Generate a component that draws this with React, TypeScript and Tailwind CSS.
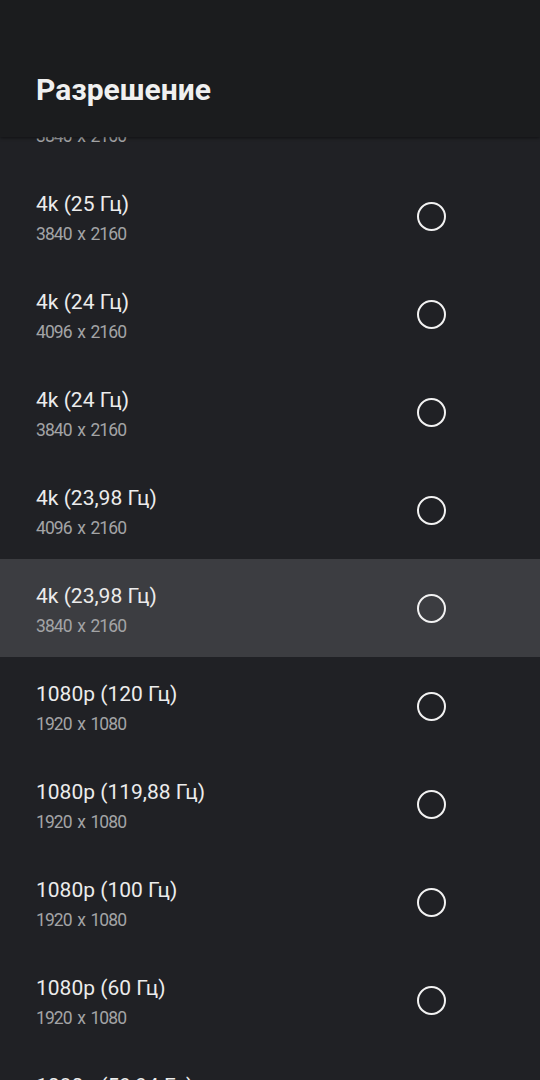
const rows = [
  { title: "4k (30 Гц)", sub: "3840 x 2160" },
  { title: "4k (25 Гц)", sub: "3840 x 2160" },
  { title: "4k (24 Гц)", sub: "4096 x 2160" },
  { title: "4k (24 Гц)", sub: "3840 x 2160" },
  { title: "4k (23,98 Гц)", sub: "4096 x 2160" },
  { title: "4k (23,98 Гц)", sub: "3840 x 2160", active: true },
  { title: "1080p (120 Гц)", sub: "1920 x 1080" },
  { title: "1080p (119,88 Гц)", sub: "1920 x 1080" },
  { title: "1080p (100 Гц)", sub: "1920 x 1080" },
  { title: "1080p (60 Гц)", sub: "1920 x 1080" },
  { title: "1080p (59,94 Гц)", sub: "1920 x 1080" },
];

function Row({ title, sub, active }: { title: string; sub: string; active?: boolean }) {
  return (
    <div className={`flex h-[98px] shrink-0 items-center justify-between pl-9 pr-[94px] ${active ? "bg-[#3c3d41]" : ""}`}>
      <div className="mt-[4px] flex flex-col">
        <span className="text-[21px] leading-[26px] text-[#ececec]">{title}</span>
        <span className="mt-[6px] text-[17.5px] leading-[22px] tracking-[-0.9px] [word-spacing:2px] text-[#a3a4a6]">{sub}</span>
      </div>
      <span className="h-[29px] w-[29px] rounded-full border-[2.5px] border-[#f2f2f2]" />
    </div>
  );
}

export default function App() {
  return (
    <div className="relative h-[1080px] w-[540px] overflow-hidden bg-[#202125] font-['Roboto',sans-serif]">
      <header className="absolute inset-x-0 top-0 z-10 flex h-[137px] items-end bg-[#1b1c1e] pb-[28px] pl-9 shadow-[0_1px_3px_rgba(0,0,0,0.5)]">
        <h1 className="text-[30px] font-bold leading-[38px] text-[#f0f0f0]">Разрешение</h1>
      </header>
      <div className="flex flex-col pt-[69px]">
        {rows.map((r, i) => (
          <Row key={i} {...r} />
        ))}
      </div>
    </div>
  );
}
